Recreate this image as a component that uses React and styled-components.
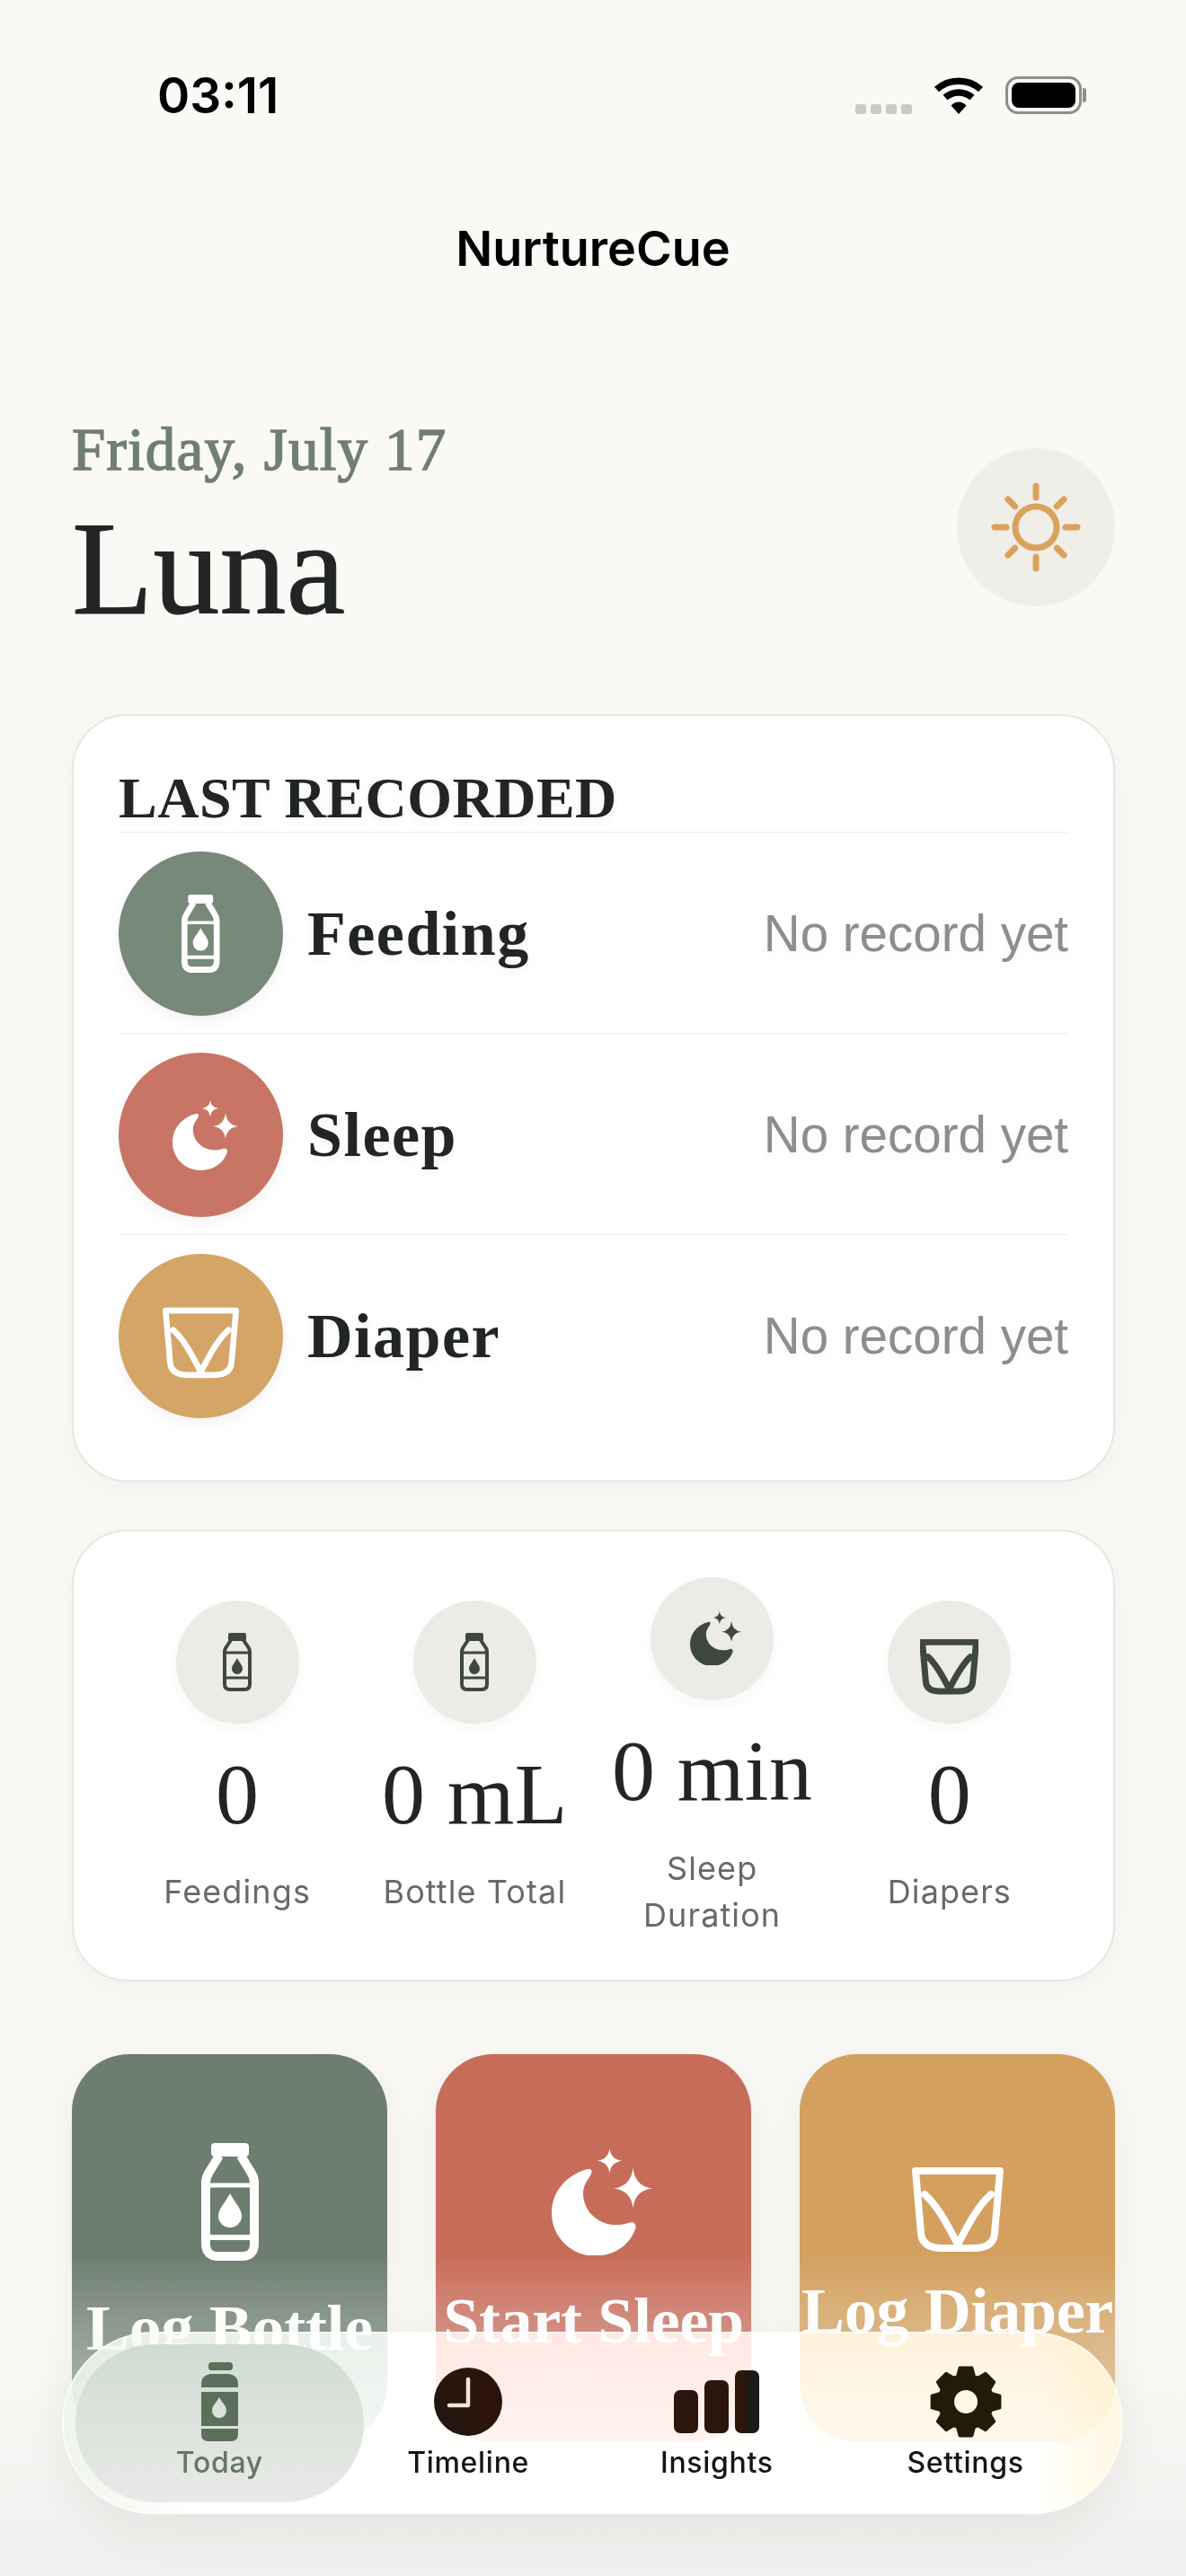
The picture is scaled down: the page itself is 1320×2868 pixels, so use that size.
import React from "react";
import styled, { createGlobalStyle } from "styled-components";

const SERIF = `"Liberation Serif", "Times New Roman", serif`;
const SANS = `Inter, "Noto Sans", sans-serif`;

const GlobalStyle = createGlobalStyle`
  html, body { margin: 0; padding: 0; background: #faf9f6; }
  * { box-sizing: border-box; }
`;

const Page = styled.div`
  position: relative;
  width: 1320px;
  height: 2868px;
  overflow: hidden;
  background: #faf9f6;
  font-family: ${SANS};
`;

const StatusBar = styled.div`
  display: flex;
  align-items: center;
  justify-content: space-between;
  padding: 85px 116px 0 175px;
`;

const Clock = styled.div`
  font-size: 55px;
  font-weight: 600;
  line-height: 42px;
  color: #000;
`;

const StatusIcons = styled.div`
  display: flex;
  align-items: flex-end;
  gap: 24px;
`;

const SignalDots = styled.div`
  display: flex;
  gap: 5px;
`;

const SignalDot = styled.span`
  width: 12px;
  height: 11px;
  border-radius: 3px;
  background: #c9c9c7;
`;

const Battery = styled.div`
  position: relative;
  width: 85px;
  height: 42px;
  padding: 4px;
  border: 3px solid #8e8e8c;
  border-radius: 14px;
  &::before {
    content: "";
    display: block;
    height: 100%;
    border-radius: 8px;
    background: #000;
  }
  &::after {
    content: "";
    position: absolute;
    right: -8px;
    top: 10px;
    width: 4px;
    height: 16px;
    border-radius: 0 3px 3px 0;
    background: #8e8e8c;
  }
`;

const AppTitle = styled.div`
  margin-top: 120px;
  text-align: center;
  font-size: 54px;
  font-weight: 600;
  line-height: 60px;
  color: #000;
`;

const Content = styled.main`
  padding: 153px 79px 0 80px;
`;

const Header = styled.header`
  display: flex;
  align-items: center;
  justify-content: space-between;
`;

const DateLine = styled.div`
  font-family: ${SERIF};
  font-size: 67px;
  line-height: 80px;
  color: #707f72;
  letter-spacing: 1.2px;
  -webkit-text-stroke: 1.5px #707f72;
`;

const BabyName = styled.h1`
  margin: 13px 0 0;
  font-family: ${SERIF};
  font-size: 148px;
  font-weight: 400;
  line-height: 160px;
  color: #212525;
  -webkit-text-stroke: 1px #212525;
`;

const ThemeButton = styled.div`
  display: flex;
  align-items: center;
  justify-content: center;
  width: 176px;
  height: 176px;
  border-radius: 50%;
  background: #f0eee9;
`;

const Card = styled.section`
  border: 2px solid #e8e6de;
  border-radius: 62px;
  background: #fff;
  box-shadow: 0 8px 30px rgba(60, 55, 40, 0.045);
`;

const RecordCard = styled(Card)`
  margin-top: 82px;
  padding: 60px 50px 50px;
`;

const SectionTitle = styled.h2`
  margin: 0 0 5px;
  font-family: ${SERIF};
  font-size: 64px;
  font-weight: 700;
  line-height: 64px;
  letter-spacing: 0.5px;
  color: #212525;
  text-shadow: 0 5px 10px rgba(60, 70, 90, 0.06);
`;

const RecordRow = styled.div`
  display: flex;
  align-items: center;
  padding: 21px 0 19px;
  border-top: 1px solid #ececea;
`;

const RecordBadge = styled.div`
  display: flex;
  flex: none;
  align-items: center;
  justify-content: center;
  width: 183px;
  height: 183px;
  border-radius: 50%;
  background: ${(p) => p.$color};
  box-shadow: 0 6px 16px rgba(60, 55, 40, 0.06);
`;

const RecordName = styled.div`
  margin-left: 27px;
  font-family: ${SERIF};
  font-size: 70px;
  font-weight: 700;
  letter-spacing: 1.5px;
  color: #212525;
  text-shadow: 0 5px 10px rgba(60, 70, 90, 0.06);
`;

const RecordValue = styled.div`
  margin-left: auto;
  font-family: "Liberation Sans", Arial, sans-serif;
  font-size: 56.500px;
  color: #8b8f8c;
  text-shadow: 0 5px 10px rgba(60, 70, 90, 0.05);
`;

const StatsCard = styled(Card)`
  display: flex;
  align-items: center;
  height: 503px;
  margin-top: 53px;
  padding: 4px 50px 0;
`;

const Stat = styled.div`
  display: flex;
  flex: 1;
  flex-direction: column;
  align-items: center;
  text-align: center;
`;

const StatBadge = styled.div`
  display: flex;
  align-items: center;
  justify-content: center;
  width: 137px;
  height: 137px;
  border-radius: 50%;
  background: #ecebe6;
  box-shadow: 0 6px 14px rgba(60, 55, 40, 0.04);
`;

const StatValue = styled.div`
  margin-top: 29px;
  font-family: ${SERIF};
  font-size: 96px;
  line-height: 100px;
  letter-spacing: 0.4px;
  color: #212525;
  white-space: nowrap;
`;

const StatLabel = styled.div`
  width: 214px;
  margin-top: 32px;
  font-size: 36px;
  line-height: 52px;
  letter-spacing: 1.1px;
  color: #666b68;
`;

const Actions = styled.div`
  display: grid;
  grid-template-columns: repeat(3, 351px);
  justify-content: space-between;
  margin-top: 81px;
`;

const ActionCard = styled.div`
  display: flex;
  flex-direction: column;
  align-items: center;
  justify-content: center;
  height: 432px;
  padding-top: 15px;
  border-radius: 64px;
  background: ${(p) => p.$color};
  box-shadow: 0 14px 44px rgba(50, 45, 30, 0.07);
`;

const ActionIcon = styled.div`
  display: flex;
  align-items: center;
  justify-content: center;
  height: ${(p) => p.$height}px;
`;

const ActionLabel = styled.div`
  margin-top: 32px;
  font-family: ${SERIF};
  font-size: 72px;
  font-weight: 700;
  line-height: 86px;
  letter-spacing: -0.3px;
  color: #fff;
  white-space: nowrap;
`;

const BottomFade = styled.div`
  position: absolute;
  left: 0;
  right: 0;
  bottom: 0;
  height: 358px;
  pointer-events: none;
  background: linear-gradient(
    to bottom,
    rgba(250, 249, 246, 0) 0%,
    rgba(248, 248, 245, 0.16) 15%,
    rgba(246, 246, 243, 0.36) 33%,
    rgba(242, 242, 240, 0.8) 72%,
    #efefed 100%
  );
`;

const TabBar = styled.nav`
  position: absolute;
  left: 69px;
  bottom: 69px;
  display: flex;
  width: 1181px;
  height: 203px;
  padding: 32px 35px 0;
  border: 2px solid rgba(255, 255, 255, 0.6);
  border-radius: 102px;
  background: linear-gradient(
    to right,
    rgba(238, 243, 236, 0.88) 0%,
    rgba(255, 255, 255, 0.82) 12%,
    rgba(255, 255, 255, 0.82) 92%,
    rgba(255, 246, 222, 0.9) 100%
  );
  backdrop-filter: saturate(2.4) brightness(1.04);
  box-shadow: 0 18px 50px rgba(40, 40, 30, 0.07);
`;

const Tab = styled.div`
  position: relative;
  display: flex;
  flex: 1;
  flex-direction: column;
  align-items: center;
  &::before {
    content: "";
    display: ${(p) => (p.$active ? "block" : "none")};
    position: absolute;
    top: -20px;
    bottom: 11px;
    left: -22px;
    right: -22px;
    border-radius: 88px;
    background: linear-gradient(to bottom, #cfdcd1, #e9e9e7);
  }
`;

const TabIcon = styled.div`
  position: relative;
  display: flex;
  align-items: center;
  justify-content: center;
  height: 88px;
`;

const TabLabel = styled.div`
  position: relative;
  margin-top: 4px;
  font-size: 32px;
  font-weight: 500;
  line-height: 40px;
  letter-spacing: 0.7px;
  color: ${(p) => (p.$active ? "#64756a" : "#151515")};
`;

const WifiIcon = () => (
  <svg width="56" height="41" viewBox="0 0 56 41" fill="none" stroke="#000" strokeWidth="7.5">
    <path d="M3.5 13.5C17 1 39 1 52.500 13.500" />
    <path d="M13 22.500C21.500 15 34.500 15 43 22.500" />
    <path d="M19.500 31.500L28 41L36.500 31.500C31.500 26 24.500 26 19.500 31.500Z" fill="#000" stroke="none" />
  </svg>
);

const SunIcon = () => {
  const rays = [0, 90, 180, 270];
  const diagonals = [45, 135, 225, 315];
  return (
    <svg width="100" height="100" viewBox="0 0 100 100" fill="none" stroke="#dba25b" strokeWidth="7" strokeLinecap="round">
      <circle cx="50" cy="50" r="23" />
      {rays.map((a) => (
        <line key={a} x1="50" y1="17" x2="50" y2="4" transform={`rotate(${a} 50 50)`} />
      ))}
      {diagonals.map((a) => (
        <line key={a} x1="50" y1="17" x2="50" y2="6" transform={`rotate(${a} 50 50)`} />
      ))}
    </svg>
  );
};

const BottleIcon = ({ height, color = "#fff" }) => (
  <svg width={(height * 64) / 131} height={height} viewBox="0 0 64 131" fill="none" stroke={color}>
    <rect x="11" y="0" width="42" height="15" rx="4" fill={color} stroke="none" />
    <path strokeWidth="10" strokeLinejoin="round" d="M20 14L9 32Q5 38 5 44V112Q5 126 19 126H45Q59 126 59 112V44Q59 38 55 32L44 14" />
    <path strokeWidth="5" d="M5 47H59" />
    <path strokeWidth="6" d="M5 105H59" />
    <path fill={color} stroke="none" d="M32 56C27 66 19 73 19 81A13 13 0 0 0 45 81C45 73 37 66 32 56Z" />
  </svg>
);

const StatBottleIcon = () => (
  <svg width="32" height="65" viewBox="0 0 32 65" fill="none" stroke="#3f4840" strokeWidth="4">
    <rect x="6" y="0" width="20" height="9" rx="2" fill="#3f4840" stroke="none" />
    <path strokeLinejoin="round" d="M9 8L3 17Q2 19 2 22V57Q2 63 8 63H24Q30 63 30 57V22Q30 19 29 17L23 8" />
    <path strokeWidth="3" d="M2 22H30M2 50H30" />
    <path fill="#3f4840" stroke="none" d="M16 28C13.500 33 10 36 10 40A6 6 0 0 0 22 40C22 36 18.500 33 16 28Z" />
  </svg>
);

const MoonIcon = ({ width, color = "#fff", nudge }) => (
  <svg width={width} height={(width * 78) / 73} viewBox="0 0 73 78" fill={color} style={{ marginLeft: nudge }}>
    <path d="M26 15C11 19 0 31 0 47C0 64 14 78 31 78C46 78 58 69 61 57C61 54 59 53 56 54C38 60 21 47 23 30C24 24 29 20 29 17C29 15 28 15 26 15Z" />
    <path d="M59 14Q60.500 27.500 73 29Q60.500 30.500 59 43Q57.500 30.500 45 29Q57.500 27.500 59 14Z" />
    <path d="M42 0Q43 8 51 9Q43 10 42 18Q41 10 33 9Q41 8 42 0Z" />
  </svg>
);

const CupIcon = ({ width, color = "#fff", strokeWidth = 8, drop }) => (
  <svg width={width} height={(width * 96) / 102} viewBox="0 0 102 96" fill="none" stroke={color} strokeWidth={strokeWidth} strokeLinejoin="round" strokeLinecap="round" style={{ marginTop: drop }}>
    <path d="M4 5H98L92 74Q91 91 68 91H34Q11 91 10 74Z" />
    <path d="M51 87C42 70 30 45 14 31" />
    <path d="M51 87C60 70 72 45 88 31" />
  </svg>
);

const TodayIcon = () => (
  <svg width="41" height="88" viewBox="0 0 41 88" fill="#5b6f5b">
    <rect x="8" y="0" width="27" height="9" rx="3.500" />
    <path d="M10 13H31Q41 15 41 24V28H0V24Q0 15 10 13Z" />
    <rect x="0" y="33" width="41" height="38" />
    <path d="M0 74H41V80Q41 88 33 88H8Q0 88 0 80Z" />
    <path fill="#d9e2d8" d="M20 39C17 45 12 48 12 54A8 8 0 0 0 28 54C28 48 23 45 20 39Z" />
  </svg>
);

const TimelineIcon = () => (
  <svg width="76" height="76" viewBox="0 0 76 76">
    <defs>
      <linearGradient id="clockFill" x1="0" x2="1" y1="1" y2="0">
        <stop offset="0" stopColor="#1a1614" />
        <stop offset="0.5" stopColor="#2b150b" />
      </linearGradient>
    </defs>
    <circle cx="38" cy="38" r="38" fill="url(#clockFill)" />
    <path d="M38 13V42H17" fill="none" stroke="#f3e5de" strokeWidth="4.500" strokeLinecap="round" strokeLinejoin="round" />
  </svg>
);

const InsightsIcon = () => (
  <svg width="95" height="70" viewBox="0 0 95 70">
    <defs>
      <linearGradient id="barFill" x1="0" x2="1" y1="0" y2="0">
        <stop offset="0.35" stopColor="#2c1509" />
        <stop offset="0.55" stopColor="#1a1a18" />
      </linearGradient>
    </defs>
    <rect x="0" y="22" width="27" height="48" rx="7" fill="#2a160d" />
    <rect x="34" y="11" width="27" height="59" rx="7" fill="#2a160d" />
    <rect x="68" y="0" width="27" height="70" rx="7" fill="url(#barFill)" />
  </svg>
);

// 8 tooth gear, built from polar points
const gearPath = () => {
  const c = 40;
  let d = "";
  for (let i = 0; i < 8; i++) {
    const a = (i * Math.PI) / 4 - Math.PI / 2;
    const pts = [
      [30, a - 0.32],
      [38.500, a - 0.18],
      [38.500, a + 0.18],
      [30, a + 0.32],
    ];
    pts.forEach(([r, t], j) => {
      const cmd = i === 0 && j === 0 ? "M" : "L";
      d += `${cmd}${(c + r * Math.cos(t)).toFixed(2)} ${(c + r * Math.sin(t)).toFixed(2)}`;
    });
  }
  return d + "Z";
};

const SettingsIcon = () => (
  <svg width="80" height="80" viewBox="0 0 80 80">
    <path d={gearPath()} fill="#241a08" stroke="#241a08" strokeWidth="3" strokeLinejoin="round" />
    <circle cx="40" cy="40" r="13" fill="#fff6e4" />
  </svg>
);

const records = [
  { name: "Feeding", color: "#778979", icon: <BottleIcon height={87} /> },
  { name: "Sleep", color: "#c97565", icon: <MoonIcon width={73} nudge={10} /> },
  { name: "Diaper", color: "#d4a566", icon: <CupIcon width={85} drop={14} /> },
];

const stats = [
  { value: "0", label: "Feedings", icon: <StatBottleIcon /> },
  { value: "0 mL", label: "Bottle Total", icon: <StatBottleIcon /> },
  { value: "0 min", label: "Sleep Duration", icon: <MoonIcon width={57} color="#3f4840" nudge={8} /> },
  { value: "0", label: "Diapers", icon: <CupIcon width={65} color="#3f4840" strokeWidth={11} drop={12} /> },
];

const actions = [
  { label: "Log Bottle", color: "#6d7e70", box: 131, icon: <BottleIcon height={131} /> },
  { label: "Start Sleep", color: "#c86c5a", box: 115, icon: <MoonIcon width={112} nudge={18} /> },
  { label: "Log Diaper", color: "#d3a05f", box: 93, icon: <CupIcon width={102} drop={16} /> },
];

const tabs = [
  { label: "Today", icon: <TodayIcon />, active: true },
  { label: "Timeline", icon: <TimelineIcon /> },
  { label: "Insights", icon: <InsightsIcon /> },
  { label: "Settings", icon: <SettingsIcon /> },
];

export default function App() {
  return (
    <Page>
      <GlobalStyle />
      <StatusBar>
        <Clock>03:11</Clock>
        <StatusIcons>
          <SignalDots>
            {[0, 1, 2, 3].map((i) => (
              <SignalDot key={i} />
            ))}
          </SignalDots>
          <WifiIcon />
          <Battery />
        </StatusIcons>
      </StatusBar>
      <AppTitle>NurtureCue</AppTitle>
      <Content>
        <Header>
          <div>
            <DateLine>Friday, July 17</DateLine>
            <BabyName>Luna</BabyName>
          </div>
          <ThemeButton>
            <SunIcon />
          </ThemeButton>
        </Header>

        <RecordCard>
          <SectionTitle>LAST RECORDED</SectionTitle>
          {records.map((r) => (
            <RecordRow key={r.name}>
              <RecordBadge $color={r.color}>{r.icon}</RecordBadge>
              <RecordName>{r.name}</RecordName>
              <RecordValue>No record yet</RecordValue>
            </RecordRow>
          ))}
        </RecordCard>

        <StatsCard>
          {stats.map((s) => (
            <Stat key={s.label}>
              <StatBadge>{s.icon}</StatBadge>
              <StatValue>{s.value}</StatValue>
              <StatLabel>{s.label}</StatLabel>
            </Stat>
          ))}
        </StatsCard>

        <Actions>
          {actions.map((a) => (
            <ActionCard key={a.label} $color={a.color}>
              <ActionIcon $height={a.box}>{a.icon}</ActionIcon>
              <ActionLabel>{a.label}</ActionLabel>
            </ActionCard>
          ))}
        </Actions>
      </Content>

      <BottomFade />
      <TabBar>
        {tabs.map((t) => (
          <Tab key={t.label} $active={t.active}>
            <TabIcon>{t.icon}</TabIcon>
            <TabLabel $active={t.active}>{t.label}</TabLabel>
          </Tab>
        ))}
      </TabBar>
    </Page>
  );
}
